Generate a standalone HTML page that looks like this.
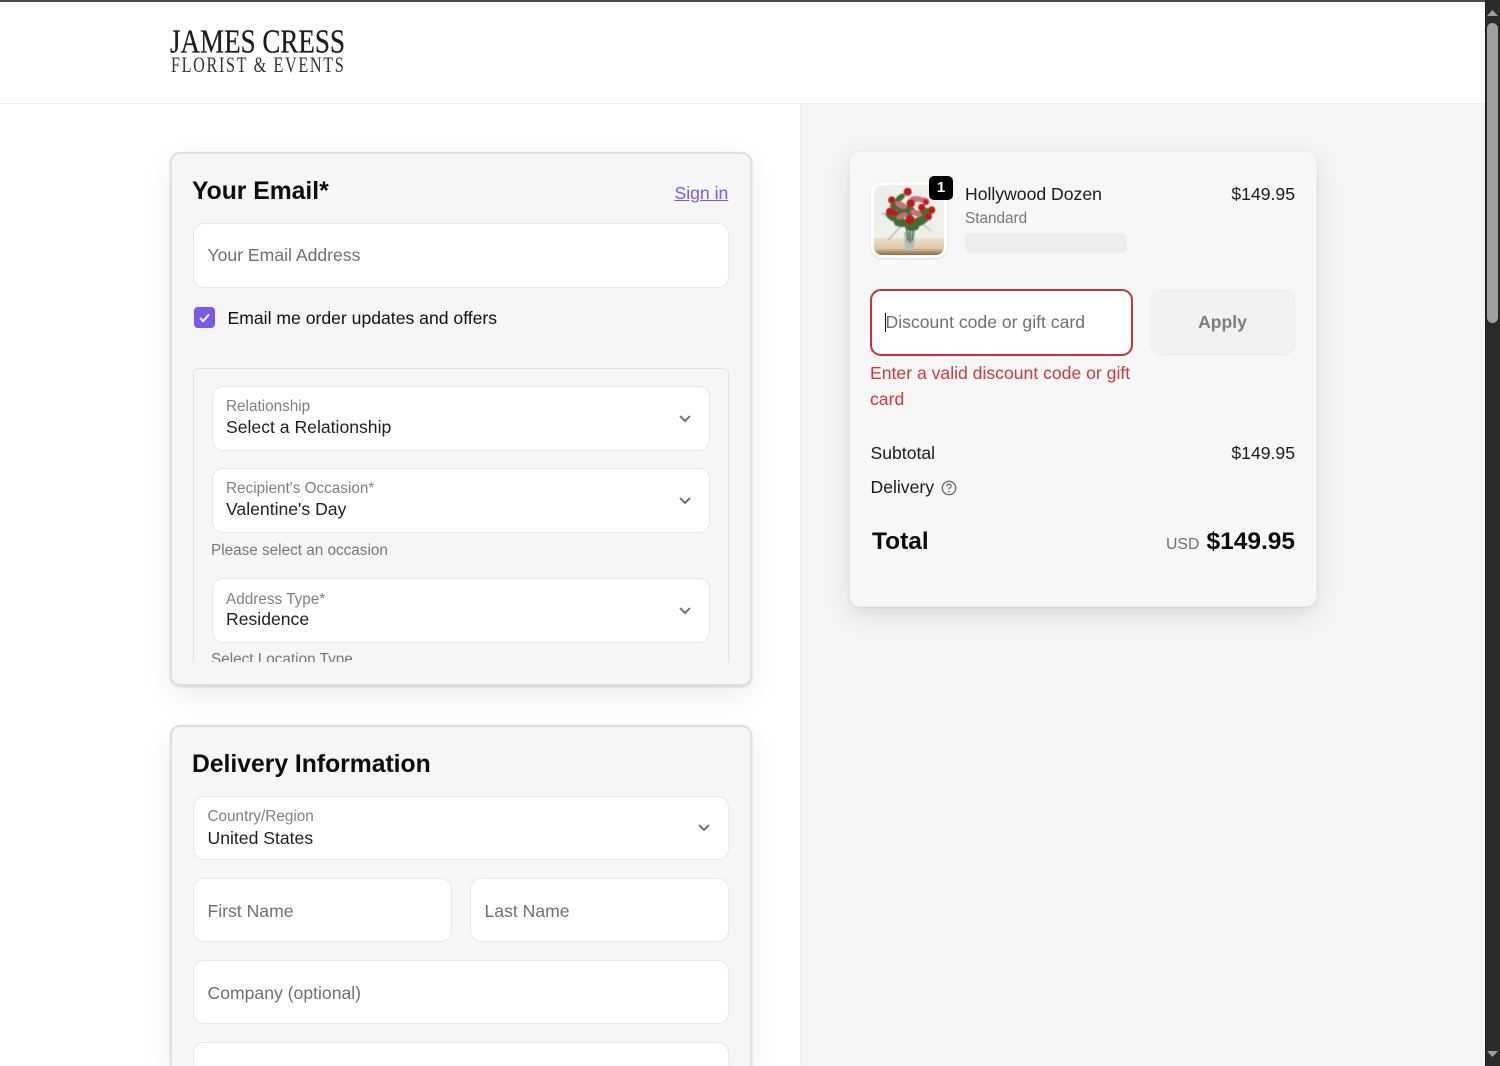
<!DOCTYPE html>
<html lang="en"><head><meta charset="utf-8"><title>Checkout</title>
<style>
html,body{margin:0;padding:0;width:1500px;height:1066px;overflow:hidden;background:#fff;font-family:"Liberation Sans",sans-serif;color:#1a1a1a}
#r{position:relative;width:1500px;height:1066px;overflow:hidden;background:#fff}
#r div,#r a,#r span{position:absolute;box-sizing:border-box;white-space:nowrap}
.t{line-height:1}
.card{background:#f6f6f6;border:2px solid #dedede;border-radius:10px;box-shadow:0 10px 30px rgba(0,0,0,.07),0 1px 2px rgba(0,0,0,.14)}
.f{background:#fff;border:1px solid #e6e6e6;border-radius:11px}
.l{font-size:15.3px;color:#808080;line-height:1}
.v{font-size:17.6px;color:#1f1f1f;line-height:1}
.p{font-size:17.6px;color:#707070;line-height:1}
svg{position:absolute;display:block}
</style></head><body><div id="r">
<div style="left:0;top:0;width:1500px;height:2px;background:#4b4b50"></div>
<div style="left:0;top:103px;width:1485px;height:1px;background:#eeeef6"></div>
<div style="left:800px;top:104px;width:685px;height:962px;background:#f5f5f5;border-left:1px solid #ededf7"></div>

<svg style="left:168px;top:24px" width="180" height="54" viewBox="0 0 180 54"><text x="2" y="28.5" font-family="Liberation Serif" font-size="33.5" fill="#1c1c1c" stroke="#1c1c1c" stroke-width=".25" textLength="175" lengthAdjust="spacingAndGlyphs">JAMES CRESS</text><text transform="translate(3 48) scale(.72 1)" x="0" y="0" font-family="Liberation Serif" font-size="22.5" fill="#333" textLength="240" lengthAdjust="spacing">FLORIST &amp; EVENTS</text></svg>

<!-- Email card -->
<div class="card" style="left:170px;top:152px;width:582px;height:534px"></div>
<div class="t" style="left:192px;top:179.5px;font-size:24.7px;font-weight:700;color:#0c0c0c">Your Email*</div>
<a class="t" style="left:674.5px;top:185px;font-size:17.6px;color:#7a58e8;text-decoration:underline">Sign in</a>
<div class="f" style="left:193px;top:223px;width:536px;height:65px"></div>
<div class="p" style="left:207.5px;top:247px">Your Email Address</div>
<div style="left:194px;top:307px;width:21px;height:21px;background:#7a58ea;border-radius:4px"></div>
<svg style="left:194px;top:307px" width="21" height="21" viewBox="0 0 21 21"><path d="M6 11l3.2 3.2L15.2 7.2" fill="none" stroke="#fff" stroke-width="2"/></svg>
<div class="t" style="left:227.5px;top:310px;font-size:17.6px;color:#111">Email me order updates and offers</div>

<div style="left:193px;top:368px;width:536px;height:294px;border:1px solid #e2e2e2;border-bottom:0;border-radius:5px 5px 0 0;overflow:hidden">
  <div class="t" style="left:17px;top:283px;font-size:15.3px;color:#777">Select Location Type</div>
</div>

<div class="f" style="left:212px;top:386px;width:498px;height:65px"></div>
<div class="l" style="left:226px;top:398.5px">Relationship</div>
<div class="v" style="left:226px;top:419px">Select a Relationship</div>
<svg style="left:678px;top:413px" width="14" height="12" viewBox="0 0 14 12"><path d="M2 3l5 5 5-5" fill="none" stroke="#666" stroke-width="1.8"/></svg>

<div class="f" style="left:212px;top:468px;width:498px;height:65px"></div>
<div class="l" style="left:226px;top:480.5px">Recipient's Occasion*</div>
<div class="v" style="left:226px;top:501px">Valentine's Day</div>
<svg style="left:678px;top:495px" width="14" height="12" viewBox="0 0 14 12"><path d="M2 3l5 5 5-5" fill="none" stroke="#666" stroke-width="1.8"/></svg>
<div class="t" style="left:211px;top:543px;font-size:15.3px;color:#777">Please select an occasion</div>

<div class="f" style="left:212px;top:578px;width:498px;height:65px"></div>
<div class="l" style="left:226px;top:592px">Address Type*</div>
<div class="v" style="left:226px;top:611px">Residence</div>
<svg style="left:678px;top:605px" width="14" height="12" viewBox="0 0 14 12"><path d="M2 3l5 5 5-5" fill="none" stroke="#666" stroke-width="1.8"/></svg>

<!-- Delivery card, cut by the viewport -->
<div class="card" style="left:170px;top:725px;width:582px;height:341px;border-bottom:0;border-radius:10px 10px 0 0"></div>
<div class="t" style="left:192px;top:753px;font-size:24.7px;font-weight:700;color:#0c0c0c">Delivery Information</div>
<div class="f" style="left:193px;top:796px;width:536px;height:64px"></div>
<div class="l" style="left:207.5px;top:809px">Country/Region</div>
<div class="v" style="left:207.5px;top:830px">United States</div>
<svg style="left:697px;top:822px" width="14" height="12" viewBox="0 0 14 12"><path d="M2 3l5 5 5-5" fill="none" stroke="#666" stroke-width="1.8"/></svg>
<div class="f" style="left:193px;top:878px;width:259px;height:64px"></div>
<div class="p" style="left:207.5px;top:902.5px">First Name</div>
<div class="f" style="left:470px;top:878px;width:259px;height:64px"></div>
<div class="p" style="left:484.5px;top:902.5px">Last Name</div>
<div class="f" style="left:193px;top:960px;width:536px;height:64px"></div>
<div class="p" style="left:207.5px;top:984.5px">Company (optional)</div>
<div class="f" style="left:193px;top:1042px;width:536px;height:24px;border-bottom:0;border-radius:11px 11px 0 0"></div>

<!-- Summary card -->
<div style="left:849px;top:151px;width:468px;height:456px;background:#f7f7f7;border:1px solid #eee;border-radius:11px;box-shadow:0 8px 24px rgba(0,0,0,.1),0 1px 2px rgba(0,0,0,.08)"></div>
<div style="left:871px;top:182px;width:76px;height:76px;background:#fff;border-radius:11px;box-shadow:0 1px 2px rgba(0,0,0,.12)"></div>
<svg style="left:874px;top:185px" width="70" height="70" viewBox="0 0 70 70">
<defs><clipPath id="c"><rect width="70" height="70" rx="8"/></clipPath><linearGradient id="w" x1="0" y1="0" x2="0" y2="1"><stop offset="0" stop-color="#ece0cb"/><stop offset=".6" stop-color="#dfc8a6"/><stop offset="1" stop-color="#8f6a3c"/></linearGradient><filter id="b" x="-10%" y="-10%" width="120%" height="120%"><feGaussianBlur stdDeviation=".45"/></filter></defs>
<g clip-path="url(#c)"><rect width="70" height="70" fill="#eef0ea"/><rect y="53" width="70" height="17" fill="url(#w)"/>
<g filter="url(#b)">
<path d="M30 47h11l-1 17h-9z" fill="#aebfc0"/>
<path d="M32 36l2 20M36 36v22M41 36l-3 20" stroke="#4c6e36" stroke-width="1.6"/>
<path d="M28 40L14 55M20 34L8 28M45 36l12 10" stroke="#8f9d7f" stroke-width=".8" fill="none"/>
<g fill="#3f6e31"><ellipse cx="21" cy="32" rx="10" ry="5" transform="rotate(25 21 32)"/><ellipse cx="46" cy="36" rx="10" ry="4.5" transform="rotate(-25 46 36)"/><ellipse cx="28" cy="38" rx="8" ry="4"/><ellipse cx="38" cy="42" rx="7" ry="4"/><ellipse cx="26" cy="13" rx="6" ry="3" transform="rotate(-40 26 13)"/><ellipse cx="52" cy="27" rx="7" ry="4"/><ellipse cx="32" cy="26" rx="9" ry="6"/><ellipse cx="22" cy="21" rx="6" ry="4"/></g>
<g fill="#c96f7c"><ellipse cx="27" cy="20" rx="6" ry="3.2" transform="rotate(25 27 20)"/><ellipse cx="42" cy="14" rx="6" ry="3"/><ellipse cx="28" cy="31" rx="6" ry="2.6" transform="rotate(-25 28 31)"/><ellipse cx="42" cy="28" rx="6" ry="3" transform="rotate(20 42 28)"/><ellipse cx="49" cy="15" rx="5" ry="2.6"/></g>
<g fill="#bf1219"><circle cx="33.7" cy="6.7" r="4"/><circle cx="17.7" cy="15" r="3.6"/><circle cx="36.7" cy="18.3" r="4.2"/><circle cx="47.7" cy="22.3" r="3.6"/><circle cx="16" cy="26.7" r="4"/><circle cx="20.5" cy="28" r="3.2"/><circle cx="57.7" cy="25" r="3.6"/><circle cx="36" cy="35" r="4.8"/><circle cx="54.3" cy="31.7" r="3.6"/><circle cx="52" cy="17" r="3"/></g>
</g></g></svg>
<div style="left:929px;top:176px;width:24px;height:24px;background:#000;border-radius:5px"></div>
<div class="t" style="left:929px;top:180px;width:24px;text-align:center;font-size:15px;font-weight:700;color:#fff">1</div>
<div class="t" style="left:965px;top:186px;font-size:17.6px;color:#1a1a1a">Hollywood Dozen</div>
<div class="t" style="left:965px;top:211px;font-size:15.3px;color:#777">Standard</div>
<div style="left:965px;top:233px;width:162px;height:20px;background:#ececec;border-radius:5px"></div>
<div class="t" style="left:1195px;width:100px;text-align:right;top:186px;font-size:17.6px;color:#1a1a1a">$149.95</div>

<div style="left:870px;top:289px;width:263px;height:67px;background:#fff;border:2.5px solid #c9323a;border-radius:11px"></div>
<div style="left:885px;top:313px;width:1px;height:19px;background:#111"></div>
<div class="p" style="left:885.5px;top:314px">Discount code or gift card</div>
<div style="left:1150px;top:290px;width:145px;height:65px;background:#f2f2f2;border:1px solid #ebebeb;border-radius:11px"></div>
<div class="t" style="left:1150px;width:145px;text-align:center;top:314px;font-size:17.6px;font-weight:700;color:#7d7d7d">Apply</div>
<div class="t" style="left:870px;top:365px;font-size:17.6px;color:#d0383e">Enter a valid discount code or gift</div>
<div class="t" style="left:870px;top:391px;font-size:17.6px;color:#d0383e">card</div>

<div class="t" style="left:870.5px;top:445px;font-size:17.6px">Subtotal</div>
<div class="t" style="left:1195px;width:100px;text-align:right;top:445px;font-size:17.6px">$149.95</div>
<div class="t" style="left:870.5px;top:479px;font-size:17.6px">Delivery</div>
<svg style="left:940px;top:479px" width="18" height="18" viewBox="0 0 18 18"><circle cx="9" cy="9" r="6.7" fill="none" stroke="#707070" stroke-width="1.4"/><path d="M6.8 7.2C6.9 5.9 7.9 5.2 9 5.2c1.2 0 2.2.8 2.2 1.9 0 1.7-2.2 1.6-2.2 3.4" fill="none" stroke="#707070" stroke-width="1.3"/><circle cx="9" cy="12.6" r=".9" fill="#707070"/></svg>
<div class="t" style="left:872px;top:530px;font-size:24.5px;font-weight:700;color:#0c0c0c">Total</div>
<div class="t" style="left:1166px;top:536.5px;font-size:15.8px;color:#707070">USD</div>
<div class="t" style="left:1195px;width:100px;text-align:right;top:530px;font-size:24.5px;font-weight:700;color:#0c0c0c">$149.95</div>

<!-- Scrollbar -->
<div style="left:1485px;top:0;width:15px;height:1066px;background:#2b2b2b;border-left:1px solid #1e1e1e"></div>
<div style="left:1487px;top:23px;width:11px;height:300px;background:#9f9f9f;border-radius:6px"></div>
<svg style="left:1485px;top:7px" width="15" height="12" viewBox="0 0 15 12"><path d="M7.5 3l5.5 6H2z" fill="#9f9f9f"/></svg>
<svg style="left:1485px;top:1048px" width="15" height="12" viewBox="0 0 15 12"><path d="M2 3h11l-5.5 6z" fill="#9f9f9f"/></svg>
</div></body></html>
